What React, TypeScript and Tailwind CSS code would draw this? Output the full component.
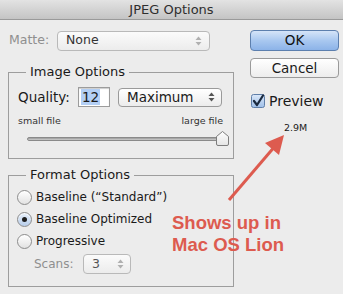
import React from "react";

function UpDown({ color = "#8a8a8a" }: { color?: string }) {
  return (
    <svg width="7" height="10" viewBox="0 0 7 10">
      <path d="M3.5 0.5 L6.5 4 L0.5 4 Z" fill={color} />
      <path d="M3.5 9.5 L6.5 6 L0.5 6 Z" fill={color} />
    </svg>
  );
}

function Radio({ checked }: { checked?: boolean }) {
  return (
    <div
      className={
        "w-[15px] h-[15px] rounded-full border border-[#8c8c8c] flex items-center justify-center shadow-[inset_0_1px_1px_rgba(255,255,255,0.9)] " +
        (checked
          ? "bg-gradient-to-b from-[#e6effa] to-[#b7cdea]"
          : "bg-gradient-to-b from-[#ffffff] to-[#e2e2e2]")
      }
    >
      {checked && <div className="w-[5px] h-[5px] rounded-full bg-[#1d1d1d]" />}
    </div>
  );
}

export default function App() {
  return (
    <div className="w-[343px] h-[294px] bg-[#ececec] relative overflow-hidden font-['DejaVu_Sans',sans-serif] text-[#1a1a1a]">
      {/* Title bar */}
      <div className="h-[20px] bg-gradient-to-b from-[#e3e3e3] to-[#c4c4c4] border-b border-[#9a9a9a] flex items-center justify-center text-[13px] text-[#2e2e2e]">
        JPEG Options
      </div>

      <div className="flex">
        {/* Left column */}
        <div className="w-[234px] pl-[8px] shrink-0">
          {/* Matte row */}
          <div className="mt-[10px] h-[21px] flex items-center">
            <div className="w-[49px] pl-[1px] text-[12.5px] text-[#8f8f8f]">Matte:</div>
            <div className="w-[153px] h-[20px] rounded-[4px] border border-[#b9b9b9] bg-gradient-to-b from-[#fbfbfb] to-[#ececec] flex items-center justify-between pl-[8px] pr-[7px] text-[12.5px] text-[#333]">
              <span>None</span>
              <UpDown color="#b0b0b0" />
            </div>
          </div>

          {/* Image Options */}
          <fieldset className="mt-[13px] w-[226px] h-[95px] border border-[#9d9d9d]">
            <legend className="ml-[17px] px-[4px] text-[13px] leading-[16px]">Image Options</legend>
            <div className="mt-[7px] pl-[9px] flex items-center h-[20px]">
              <span className="w-[60px] text-[13.5px]">Quality:</span>
              <div className="w-[32px] h-[20px] bg-white border border-[#9c9c9c] shadow-[inset_0_1px_1px_rgba(0,0,0,0.2)] flex items-center pl-[2px]">
                <span className="bg-[#b3cff5] text-[13.5px] leading-[16px] px-[1px]">12</span>
              </div>
              <div className="ml-[8px] w-[104px] h-[19px] rounded-[4px] border border-[#9a9a9a] bg-gradient-to-b from-[#ffffff] to-[#ececec] flex items-center justify-between pl-[8px] pr-[6px] text-[13.5px]">
                <span>Maximum</span>
                <UpDown color="#555" />
              </div>
            </div>
            <div className="mt-[8px] pl-[9px] pr-[10px] flex justify-between text-[9.5px] leading-[12px] text-[#333]">
              <span>small file</span>
              <span>large file</span>
            </div>
            <div className="mt-[4px] ml-[18px] w-[196px] h-[16px] relative flex items-center">
              <div className="w-full h-[4px] rounded-full bg-gradient-to-b from-[#9a9a9a] to-[#cfcfcf] border border-[#8a8a8a]" />
              <svg className="absolute right-[-6px] top-0" width="13" height="15" viewBox="0 0 13 15">
                <defs>
                  <linearGradient id="thumbG" x1="0" y1="0" x2="0" y2="1">
                    <stop offset="0" stopColor="#ffffff" />
                    <stop offset="1" stopColor="#e4e4e4" />
                  </linearGradient>
                </defs>
                <path d="M6.5 0.5 L12.5 5.5 L12.5 13 Q12.5 14.5 11 14.5 L2 14.5 Q0.5 14.5 0.5 13 L0.5 5.5 Z" fill="url(#thumbG)" stroke="#7d7d7d" strokeWidth="1" />
              </svg>
            </div>
          </fieldset>

          {/* Format Options */}
          <fieldset className="mt-[8px] w-[226px] h-[120px] border border-[#9d9d9d]">
            <legend className="ml-[17px] px-[4px] text-[13px] leading-[16px]">Format Options</legend>
            <div className="mt-[6px] pl-[8px] flex flex-col gap-[6px] text-[12px]">
              <div className="flex items-center gap-[4px] h-[16px]">
                <Radio />
                <span>Baseline (“Standard”)</span>
              </div>
              <div className="flex items-center gap-[4px] h-[16px]">
                <Radio checked />
                <span>Baseline Optimized</span>
              </div>
              <div className="flex items-center gap-[4px] h-[16px]">
                <Radio />
                <span>Progressive</span>
              </div>
            </div>
            <div className="mt-[5px] pl-[25px] flex items-center h-[20px]">
              <span className="w-[49px] text-[12px] text-[#8f8f8f]">Scans:</span>
              <div className="w-[48px] h-[20px] rounded-[4px] border border-[#b9b9b9] bg-gradient-to-b from-[#fbfbfb] to-[#ececec] flex items-center justify-between pl-[8px] pr-[6px] text-[12.5px] text-[#555]">
                <span>3</span>
                <UpDown color="#b0b0b0" />
              </div>
            </div>
          </fieldset>
        </div>

        {/* Right column */}
        <div className="pl-[16px] flex flex-col">
          <div className="mt-[10px] w-[89px] h-[21px] rounded-[4px] border border-[#5c7fae] bg-gradient-to-b from-[#d5e4f8] via-[#a9c8f0] to-[#8cb3e8] flex items-center justify-center text-[13.5px] text-[#111]">
            OK
          </div>
          <div className="mt-[7px] w-[89px] h-[20px] rounded-[4px] border border-[#9a9a9a] bg-gradient-to-b from-[#ffffff] to-[#ededed] flex items-center justify-center text-[13.5px]">
            Cancel
          </div>
          <div className="mt-[15px] ml-[1px] flex items-center h-[16px]">
            <svg width="14" height="14" viewBox="0 0 14 14">
              <defs>
                <linearGradient id="cbG" x1="0" y1="0" x2="0" y2="1">
                  <stop offset="0" stopColor="#dbe8f9" />
                  <stop offset="1" stopColor="#9fbfe8" />
                </linearGradient>
              </defs>
              <rect x="0.5" y="0.5" width="13" height="13" rx="2" fill="url(#cbG)" stroke="#5f7ea8" />
              <path d="M3 7 L6 11 L12 1.5" fill="none" stroke="#1b2a3f" strokeWidth="2.2" strokeLinecap="round" strokeLinejoin="round" />
            </svg>
            <span className="ml-[4px] text-[14px]">Preview</span>
          </div>
          <div className="mt-[13px] pl-[34px] text-[9.5px] leading-[12px]">2.9M</div>
        </div>
      </div>

      {/* Annotation overlay */}
      <svg className="absolute left-0 top-0 pointer-events-none" width="343" height="294" viewBox="0 0 343 294">
        <line x1="229" y1="200" x2="276" y2="145" stroke="#dd5b4f" strokeWidth="3" />
        <path d="M284 135 L265 143 L279 155 Z" fill="#dd5b4f" />
      </svg>
      <div className="absolute left-[172px] top-[212px] text-[18.5px] leading-[22px] font-bold text-[#dd5b4f] font-['Liberation_Sans',sans-serif]">
        <div>Shows up in</div>
        <div>Mac OS Lion</div>
      </div>
    </div>
  );
}
